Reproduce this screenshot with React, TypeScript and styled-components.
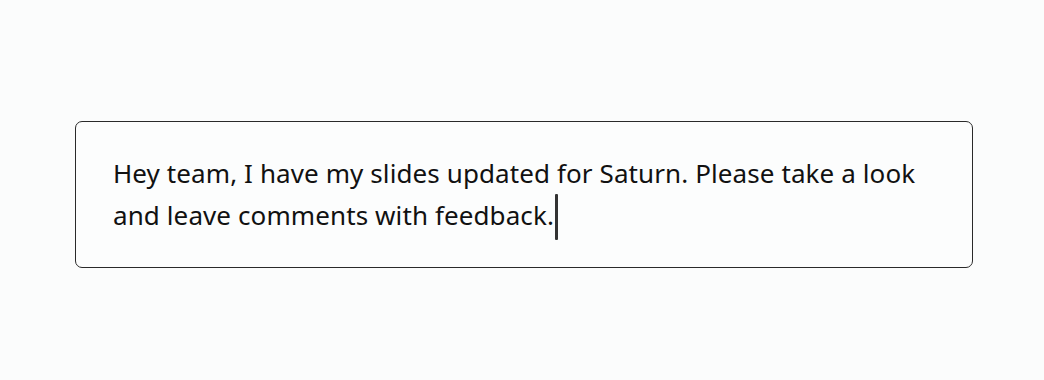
import styled, { createGlobalStyle } from "styled-components";

const GlobalStyle = createGlobalStyle`
  html, body {
    margin: 0;
    padding: 0;
    background: #fbfcfc;
  }
`;

const Page = styled.div`
  width: 1044px;
  height: 380px;
  box-sizing: border-box;
  padding: 121px 71px 0 75px;
`;

const MessageBox = styled.div`
  box-sizing: border-box;
  width: 898px;
  height: 147px;
  border: 1px solid #2a2a2a;
  border-radius: 7px;
  background: #fcfdfd;
  padding: 31px 37px;
`;

const Message = styled.p`
  margin: 0;
  font-family: "Noto Sans", "Open Sans", sans-serif;
  font-size: 26px;
  letter-spacing: 0.1px;
  line-height: 41px;
  color: #111;
`;

const Caret = styled.span`
  display: inline-block;
  width: 3px;
  height: 46px;
  margin-left: 1px;
  background: #333;
  border-radius: 1px;
  vertical-align: -15px;
`;

export default function App(): JSX.Element {
  return (
    <Page>
      <GlobalStyle />
      <MessageBox>
        <Message>
          Hey team, I have my slides updated for Saturn. Please take a look
          <br />
          and leave comments with feedback.<Caret />
        </Message>
      </MessageBox>
    </Page>
  );
}
